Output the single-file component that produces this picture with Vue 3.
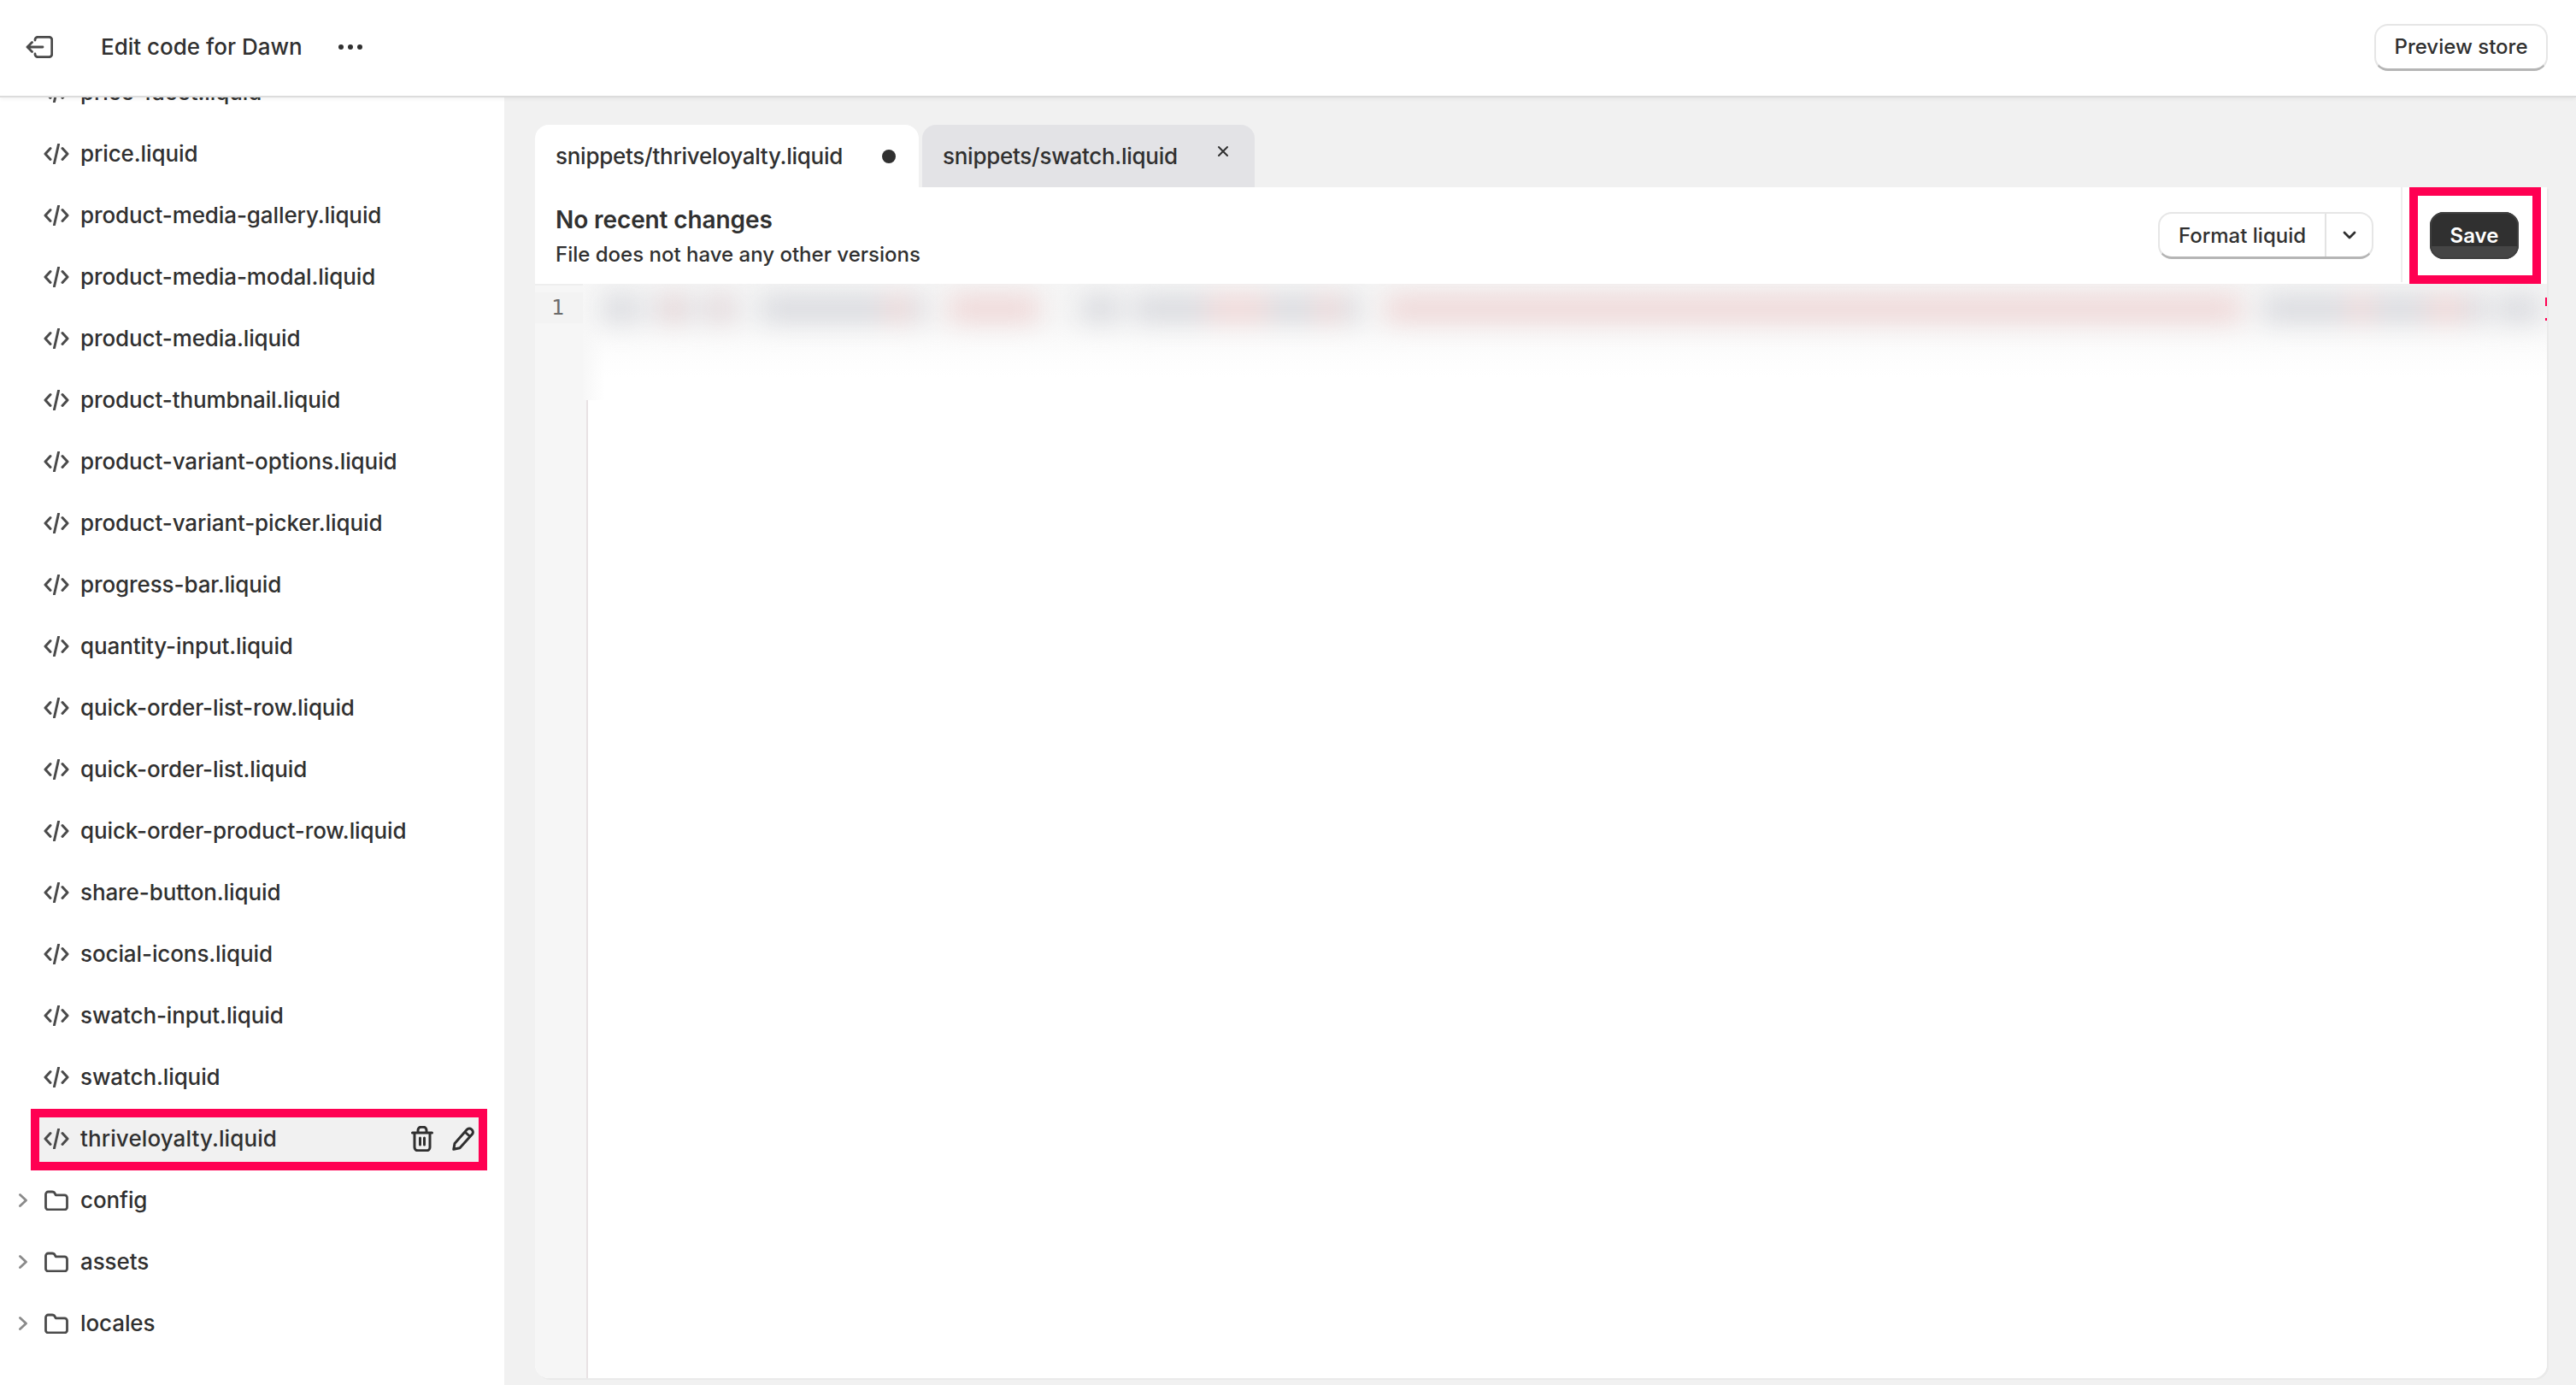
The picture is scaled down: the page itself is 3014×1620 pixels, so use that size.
<script setup>
const files = [
  'price-facet.liquid', 'price.liquid', 'product-media-gallery.liquid', 'product-media-modal.liquid',
  'product-media.liquid', 'product-thumbnail.liquid', 'product-variant-options.liquid',
  'product-variant-picker.liquid', 'progress-bar.liquid', 'quantity-input.liquid',
  'quick-order-list-row.liquid', 'quick-order-list.liquid', 'quick-order-product-row.liquid',
  'share-button.liquid', 'social-icons.liquid', 'swatch-input.liquid', 'swatch.liquid'
]
const folders = ['config', 'assets', 'locales']
const rawSegs = [
  [706, 748, 'g'], [764, 778, 'g'], [778, 798, 'p'], [798, 812, 'g'], [824, 836, 'g'], [836, 850, 'p'], [850, 862, 'g'],
  [890, 1036, 'g'], [1036, 1064, 'p'], [1064, 1082, 'g'], [1110, 1215, 'p'], [1265, 1310, 'g'],
  [1327, 1412, 'g'], [1412, 1484, 'p'], [1484, 1540, 'g'], [1540, 1568, 'p'], [1568, 1590, 'g'],
  [1622, 2622, 'p'], [2648, 2748, 'g'], [2748, 2776, 'p'], [2776, 2840, 'g'], [2840, 2884, 'p'], [2884, 2910, 'g'], [2922, 2972, 'g']
]
const segs = rawSegs.map((s, i) => ({
  width: s[1] - s[0] + 'px',
  marginLeft: (i === 0 ? s[0] - 682 : s[0] - rawSegs[i - 1][1]) + 'px',
  tone: s[2]
}))
</script>

<template>
  <div class="page">
    <header class="topbar">
      <div class="top-left">
        <svg class="exit" width="32" height="26" viewBox="0 0 32 26" fill="none">
          <path d="M11 5V4.500a3.200 3.200 0 0 1 3.200-3.200H27.500a3.200 3.200 0 0 1 3.200 3.200v17a3.200 3.200 0 0 1-3.200 3.200H14.200a3.200 3.200 0 0 1-3.200-3.200V21M20 13H2M7.500 7.500 2 13l5.500 5.500" stroke="#4a4a4a" stroke-width="2.800" stroke-linecap="round" stroke-linejoin="round" />
        </svg>
        <span class="title">Edit code for Dawn</span>
        <svg class="more" width="30" height="8" viewBox="0 0 30 8"><circle cx="4" cy="4" r="3" fill="#303030" /><circle cx="15" cy="4" r="3" fill="#303030" /><circle cx="26" cy="4" r="3" fill="#303030" /></svg>
      </div>
      <button class="btn preview">Preview store</button>
    </header>

    <div class="body">
      <aside class="sidebar">
        <ul class="tree">
          <li v-for="f in files" :key="f" class="row">
            <span class="chev-slot"></span>
            <svg class="ico" width="30" height="24" viewBox="0 0 30 24" fill="none"><path d="M8 5.500 2 12l6 6.500M22 5.500 28 12l-6 6.500M17.500 1l-5 22" stroke="#4a4a4a" stroke-width="3" stroke-linecap="round" stroke-linejoin="round" /></svg>
            <span class="name">{{ f }}</span>
          </li>
          <li class="row selected">
            <span class="sel-box"></span>
            <span class="chev-slot"></span>
            <svg class="ico" width="30" height="24" viewBox="0 0 30 24" fill="none"><path d="M8 5.500 2 12l6 6.500M22 5.500 28 12l-6 6.500M17.500 1l-5 22" stroke="#4a4a4a" stroke-width="3" stroke-linecap="round" stroke-linejoin="round" /></svg>
            <span class="name strong">thriveloyalty.liquid</span>
            <span class="actions">
              <svg width="26" height="30" viewBox="0 0 26 30" fill="none"><path d="M1.500 8h23M8 8V5a3.800 3.800 0 0 1 3.800-3.800h2.400A3.800 3.800 0 0 1 18 5v3M4 8v17a3.800 3.800 0 0 0 3.800 3.800h10.400A3.800 3.800 0 0 0 22 25V8M10.500 14v8M15.500 14v8" stroke="#303030" stroke-width="3" stroke-linecap="round" stroke-linejoin="round" /></svg>
              <svg width="26" height="28" viewBox="0 0 26 28" fill="none"><path d="M1.800 26.300 3 19.500 17.300 3.300a3.800 3.800 0 0 1 5.400-.3l.4.400a3.800 3.800 0 0 1 .3 5.400L9 24.700ZM15 6l6 5.500" stroke="#303030" stroke-width="3" stroke-linecap="round" stroke-linejoin="round" /></svg>
            </span>
          </li>
          <li v-for="d in folders" :key="d" class="row">
            <svg class="chev-slot" width="10" height="16" viewBox="0 0 10 16" fill="none"><path d="M1.500 1.500 8.500 8l-7 6.500" stroke="#8a8a8a" stroke-width="2.800" stroke-linecap="round" stroke-linejoin="round" /></svg>
            <svg class="ico" width="30" height="24" viewBox="0 0 30 24" fill="none"><path d="M2.500 5a3 3 0 0 1 3-3H10c1.500 0 2.600.7 3.200 2l1 1.800h10.300a3 3 0 0 1 3 3V20a3 3 0 0 1-3 3h-19a3 3 0 0 1-3-3Z" stroke="#4a4a4a" stroke-width="2.800" stroke-linejoin="round" /></svg>
            <span class="name">{{ d }}</span>
          </li>
        </ul>
      </aside>

      <main class="main">
        <div class="tabs">
          <div class="tab active">
            <span class="tab-text">snippets/<b>thriveloyalty.liquid</b></span>
            <span class="dot"></span>
          </div>
          <div class="tab inactive">
            <span class="tab-text">snippets/swatch.liquid</span>
            <svg class="close" width="14" height="14" viewBox="0 0 14 14" fill="none"><path d="m2 2 10 10M12 2 2 12" stroke="#303030" stroke-width="2" stroke-linecap="round" /></svg>
          </div>
        </div>

        <section class="panel">
          <div class="toolbar">
            <div class="info">
              <div class="info-title">No recent changes</div>
              <div class="info-sub">File does not have any other versions</div>
            </div>
            <div class="split">
              <button class="split-main">Format liquid</button>
              <button class="split-more">
                <svg width="16" height="10" viewBox="0 0 16 10" fill="none"><path d="m2 2 6 6 6-6" stroke="#303030" stroke-width="2.800" stroke-linecap="round" stroke-linejoin="round" /></svg>
              </button>
            </div>
            <span class="sep"></span>
            <div class="save-wrap">
              <span class="save-box"></span>
              <button class="save">Save</button>
            </div>
          </div>

          <div class="editor">
            <div class="gutter">
              <div class="line-no">1</div>
            </div>
            <div class="code">
              <div class="blur-zone">
                <div class="blur-line">
                  <span v-for="(s, i) in segs" :key="i" class="seg" :class="s.tone" :style="{ width: s.width, marginLeft: s.marginLeft }"></span>
                </div>
                <span class="tick tick-a"></span>
                <span class="tick tick-b"></span>
              </div>
            </div>
          </div>
        </section>
      </main>
    </div>
  </div>
</template>

<style>
html, body { margin: 0; padding: 0; background: #f1f1f1; }
</style>

<style scoped>
* { box-sizing: border-box; }
.page {
  width: 3014px; height: 1620px; display: flex; flex-direction: column; overflow: hidden;
  font-family: Inter, "Liberation Sans", sans-serif; font-size: 26px; color: #303030; font-weight: 450;
}
.topbar {
  height: 114px; flex: none; display: flex; align-items: center; justify-content: space-between;
  padding: 0 33px 2px 30px; background: #fff; border-bottom: 2px solid #dcdcdc;
  box-shadow: 0 2px 4px rgba(0,0,0,.05); position: relative; z-index: 2;
}
.top-left { display: flex; align-items: center; }
.exit { flex: none; }
.title { margin-left: 56px; line-height: 32px; }
.more { margin-left: 41px; }
.btn, .split, .save { font: inherit; color: inherit; }
.preview {
  width: 203px; height: 55px; padding: 0; background: #fff; border: 2px solid #e6e6e6; border-bottom: 3px solid #b5b5b5;
  border-radius: 16px; font-size: 24px; font-weight: 500;
}
.body { flex: 1; display: flex; min-height: 0; margin-top: -2px; }
.sidebar { width: 590px; flex: none; background: #fff; overflow: hidden; }
.tree { list-style: none; margin: -40px 0 0; padding: 0; }
.row { position: relative; height: 72px; display: flex; align-items: center; padding: 0 15px 0 22px; }
.chev-slot { width: 10px; flex: none; margin-right: 19px; position: relative; }
.ico { flex: none; position: relative; }
.name { margin-left: 13px; position: relative; line-height: 32px; letter-spacing: -.1px; }
.strong { font-weight: 500; letter-spacing: .1px; }
.sel-box {
  position: absolute; left: 36px; top: 1px; width: 534px; height: 72px;
  border: 10px solid #ff0052; background: #f1f1f1;
}
.actions { position: relative; margin-left: auto; display: flex; align-items: center; gap: 22px; padding-right: 20px; }
.main { flex: 1; min-width: 0; display: flex; flex-direction: column; padding: 34px 34px 8px 36px; background: #f1f1f1; }
.tabs { display: flex; gap: 4px; height: 73px; flex: none; }
.tab { display: flex; align-items: center; padding-left: 24px; border-radius: 16px 16px 0 0; }
.active { width: 449px; background: #fff; }
.inactive { width: 389px; background: #e3e3e6; }
.tab-text { line-height: 32px; white-space: nowrap; letter-spacing: -.27px; }
.tab-text b { font-weight: 550; }
.dot { width: 16px; height: 16px; border-radius: 50%; background: #303030; margin-left: 46px; }
.close { margin-left: 46px; margin-bottom: 12px; }
.panel {
  flex: 1; min-height: 0; display: flex; flex-direction: column; background: #fff;
  border-radius: 0 0 16px 16px; overflow: hidden; box-shadow: 2px 2px 0 #eaeaea;
}
.toolbar { height: 113px; flex: none; display: flex; align-items: center; padding: 0 33px 0 24px; }
.info { flex: 1; padding-top: 2px; }
.info-title { font-size: 28px; font-weight: 600; line-height: 36px; letter-spacing: -.1px; }
.info-sub { margin-top: 6px; line-height: 34px; font-size: 24px; }
.split {
  width: 252px; height: 55px; display: flex; background: #fff; border: 2px solid #e6e6e6; border-bottom: 3px solid #b5b5b5;
  border-radius: 16px; overflow: hidden;
}
.split-main { flex: 1; font: inherit; font-size: 24px; font-weight: 500; color: inherit; background: none; border: 0; padding: 0; }
.split-more { width: 55px; flex: none; background: none; border: 0; border-left: 2px solid #e3e3e3; padding: 0; display: flex; align-items: center; justify-content: center; }
.sep { width: 2px; height: 111px; align-self: flex-start; margin: 0 32px 0 32px; background: #eeeeee; }
.save-wrap { position: relative; align-self: stretch; display: flex; align-items: center; }
.save-box { position: absolute; left: -24px; right: -26px; top: 0; bottom: 0; border: 10px solid #ff0052; }
.save {
  position: relative; width: 104px; height: 55px; padding: 0; font-size: 24px; font-weight: 600; color: #fff; border: 0; border-radius: 16px;
  background: linear-gradient(#303030 72%, #454545 72%); box-shadow: inset 0 0 0 2px #3f3f3f;
}
.editor { flex: 1; min-height: 0; display: flex; }
.gutter { width: 62px; flex: none; background: #f6f6f6; border-right: 2px solid #e8e2e4; border-top: 2px solid #eeeeee; padding-top: 8px; }
.line-no {
  height: 36px; line-height: 36px; padding-left: 19px; background: #f3f3f3;
  font-family: "DejaVu Sans Mono", "Liberation Mono", monospace; font-size: 25px; font-weight: 400; color: #6b6b6b;
}
.code { flex: 1; position: relative; background: #fff; }
.blur-zone {
  position: absolute; left: -6px; top: 0; right: 0; height: 136px; overflow: hidden;
  background:
    linear-gradient(90deg, #f7f7f7, rgba(255,255,255,0) 26px),
    linear-gradient(180deg, #f5f5f5, #f6f6f6 40px, #fdfdfd 84px, #fff 110px);
}
.blur-line { display: flex; height: 30px; margin-top: 14px; filter: blur(15px); }
.seg { flex: none; height: 100%; }
.seg.g { background: #d8d9de; }
.seg.p { background: #efd6d6; }
.tick { position: absolute; right: 0; width: 2px; background: #ff0052; }
.tick-a { top: 16px; height: 10px; }
.tick-b { top: 40px; height: 3px; }
</style>
